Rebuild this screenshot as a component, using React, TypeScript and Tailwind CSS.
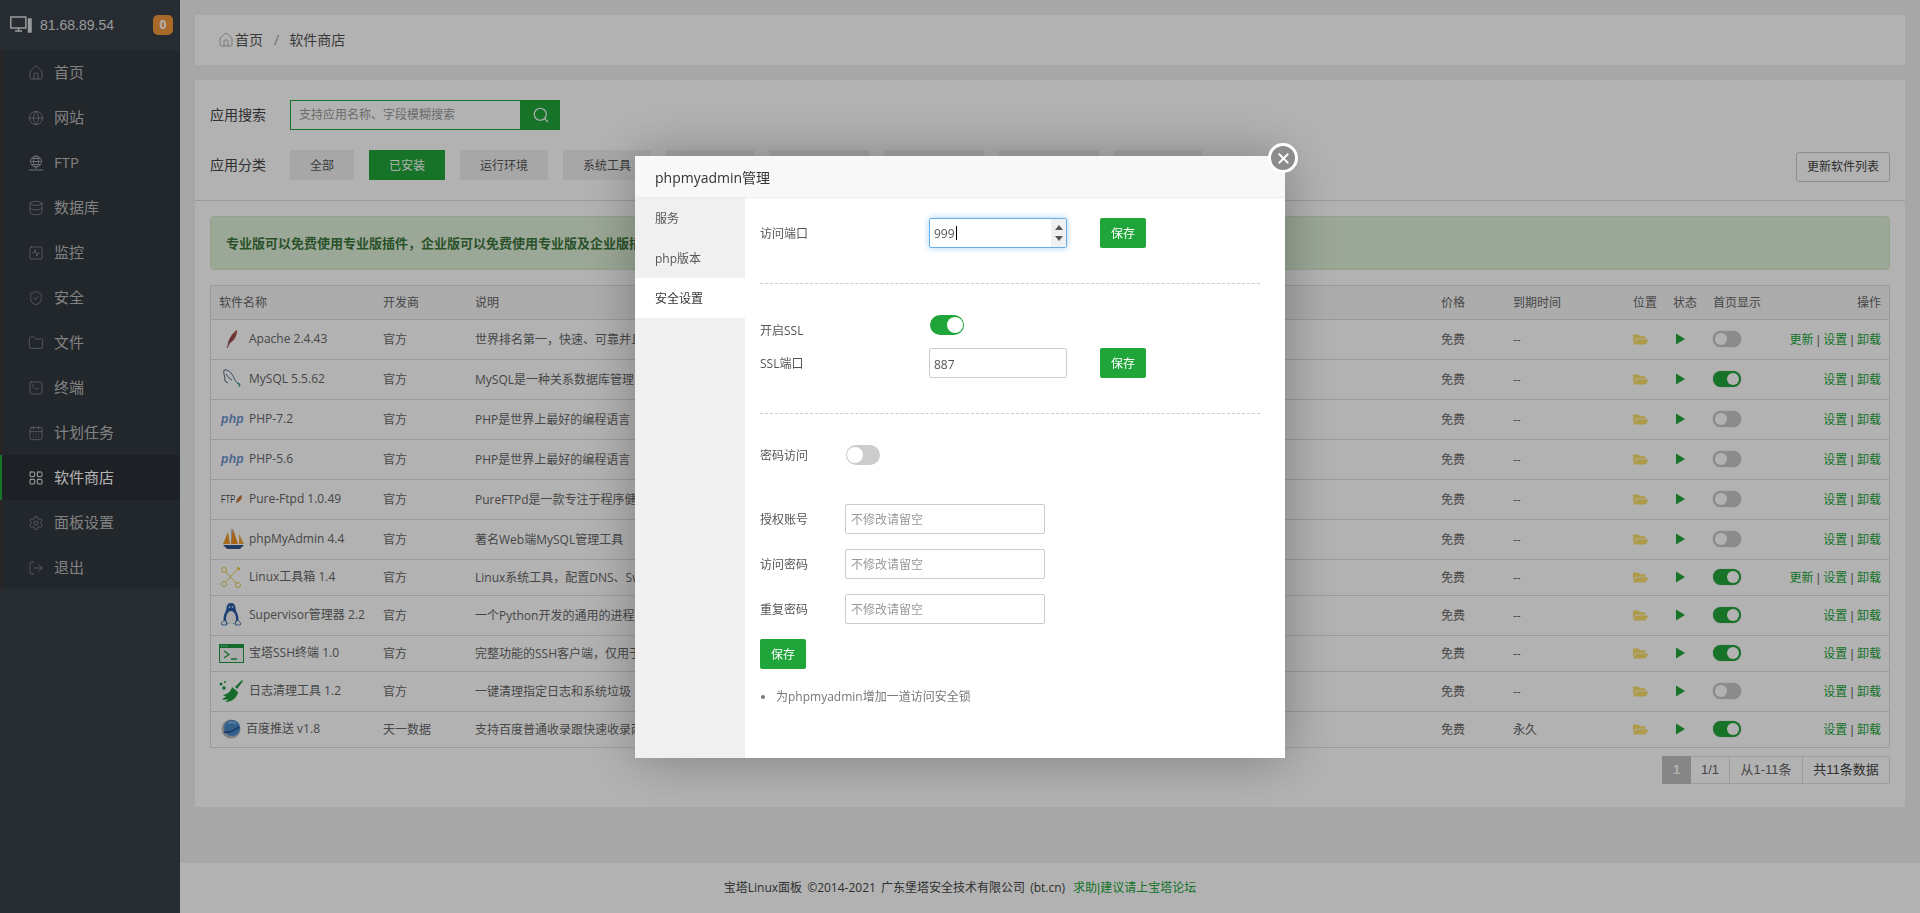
import { useState } from 'react';
import {
  House, Globe, Database, SquareActivity, ShieldCheck, Folder, SquareTerminal,
  CalendarDays, LayoutGrid, Settings, LogOut, Search, X,
} from 'lucide-react';
import { FaFolderOpen } from 'react-icons/fa';

const FONT = '"Open Sans", "Noto Sans CJK SC", sans-serif';

function FtpGlobe() {
  return (
    <svg width="16" height="16" viewBox="0 0 16 16" fill="none" stroke="currentColor" strokeWidth="1">
      <circle cx="8" cy="6.5" r="5.5" />
      <ellipse cx="8" cy="6.5" rx="2.5" ry="5.5" />
      <path d="M2.5 6.5h11M3.5 3.5h9M3.5 9.5h9M8 12v2M1 15h14" />
    </svg>
  );
}

const menu = [
  { label: '首页', icon: <House size={16} strokeWidth={1} /> },
  { label: '网站', icon: <Globe size={16} strokeWidth={1} /> },
  { label: 'FTP', icon: <FtpGlobe /> },
  { label: '数据库', icon: <Database size={16} strokeWidth={1} /> },
  { label: '监控', icon: <SquareActivity size={16} strokeWidth={1} /> },
  { label: '安全', icon: <ShieldCheck size={16} strokeWidth={1} /> },
  { label: '文件', icon: <Folder size={16} strokeWidth={1} /> },
  { label: '终端', icon: <SquareTerminal size={16} strokeWidth={1} /> },
  { label: '计划任务', icon: <CalendarDays size={16} strokeWidth={1} /> },
  { label: '软件商店', icon: <LayoutGrid size={16} strokeWidth={1.4} />, active: true },
  { label: '面板设置', icon: <Settings size={16} strokeWidth={1} /> },
  { label: '退出', icon: <LogOut size={16} strokeWidth={1} /> },
];

function Feather() {
  return (
    <svg width="24" height="24" viewBox="0 0 24 24">
      <path d="M8 20C9 13 13 6 18 3c.5 6-3.500 12-9 14z" fill="#a34f4a" />
      <path d="M8 21 14 9" stroke="#7a4a50" strokeWidth="1" />
    </svg>
  );
}

function Dolphin() {
  return (
    <svg width="24" height="24" viewBox="0 0 24 24" fill="none" strokeWidth="1">
      <path d="M5 3c4-1 8 3 10 8 1 3 4 5 6 8" stroke="#44709a" />
      <path d="M5 3c-1 3 1 6 1 11M6 14l3 2M7 7c2 3 4 5 6 6" stroke="#44607a" />
      <path d="M18 16l3 1-1 3" stroke="#2f9a90" />
    </svg>
  );
}

function PhpMark() {
  return <span className="w-[24px] pl-[2px] text-[12px] font-bold italic leading-none tracking-[0.3px] text-[#6a92d0] [font-family:'Liberation_Sans',sans-serif]">php</span>;
}

function FtpMark() {
  return (
    <span className="flex w-[24px] items-center pl-[2px] leading-none text-[#444] [font-family:'Liberation_Sans',sans-serif]">
      <span className="inline-block w-[14px] origin-left scale-x-[0.68] text-[11px]">FTP</span>
      <svg width="8" height="10" viewBox="0 0 8 10" className="shrink-0">
        <path d="M1 9c0-4 3-7 6-8 0 4-2 7-6 8z" fill="#c9793a" />
      </svg>
    </span>
  );
}

function Ship() {
  return (
    <svg width="25" height="24" viewBox="0 0 25 24">
      <path d="M13 2v15" stroke="#555" strokeWidth="0.8" />
      <polygon points="4,17 9,5 11,17" fill="#f09a2a" />
      <polygon points="12,17 14,2 19,17" fill="#ee8e1c" />
      <polygon points="20,17 20,7 25,17" fill="#f0a63c" />
      <path d="M4 18h21l-4 4H8z" fill="#34558c" />
    </svg>
  );
}

function Tools() {
  return (
    <svg width="24" height="24" viewBox="0 0 24 24" fill="none" stroke="#e8cc58" strokeWidth="1">
      <path d="M6 6 18 19M20 3 6 17" />
      <circle cx="5" cy="5" r="2.500" />
      <circle cx="19" cy="20" r="2.500" />
      <circle cx="5" cy="19" r="2.500" />
      <path d="M19 2l2 2-1.500 1.500L18 4z" fill="#e8cc58" />
    </svg>
  );
}

function Penguin() {
  return (
    <svg width="24" height="24" viewBox="0 0 24 24">
      <path d="M12 0c3 0 4.500 2 4.500 5 0 3 3 6 3 11 0 3-3 5-7.500 5S4.500 19 4.500 16c0-5 3-8 3-11 0-3 1.500-5 4.500-5z" fill="#2a5ea8" />
      <path d="M12 8c3 0 5 4 5 8s-2 5-5 5-5-1-5-5 2-8 5-8z" fill="#f4f4f4" />
      <circle cx="10.500" cy="4" r="0.800" fill="#fff" />
      <circle cx="13.500" cy="4" r="0.800" fill="#fff" />
      <path d="M2 21c1-3 3-4 5-3l1 4H3zM22 21c-1-3-3-4-5-3l-1 4h5z" fill="#f4f4f4" stroke="#2a5ea8" strokeWidth="0.8" />
    </svg>
  );
}

function TerminalMark() {
  return (
    <svg width="25" height="19" viewBox="0 0 25 19" fill="none">
      <rect x="0.500" y="0.500" width="24" height="18" stroke="#1f9a40" fill="#f6f6f6" />
      <rect x="0" y="0" width="25" height="4" fill="#1f9a40" />
      <path d="M2 2h1M4.500 2h1M7 2h1" stroke="#fff" />
      <path d="M5 7l5 3.500L5 14M12 15h6" stroke="#1f9a40" strokeWidth="1.300" />
    </svg>
  );
}

function Broom() {
  return (
    <svg width="24" height="24" viewBox="0 0 24 24" fill="#1f9a40">
      <path d="M23 1l1 1-6 8-2-2z" />
      <path d="M13 8l6 5c-1 6-6 10-13 10 2-1 3-3 3-3-2 1-5 1-6 0 3-1 4-3 4-3-1 0-2 0-3-1 5-1 8-4 9-8z" />
      <circle cx="2" cy="5" r="1.500" />
      <circle cx="6" cy="3" r="1" />
      <circle cx="5" cy="9" r="1.800" />
    </svg>
  );
}

function BaiduGlobe() {
  return (
    <svg width="20" height="20" viewBox="0 0 20 20">
      <circle cx="10" cy="10" r="9.500" fill="#b4b8c0" />
      <circle cx="11" cy="9" r="8" fill="#4a88c8" />
      <path d="M3 13c5 1 10-1 15-5" stroke="#2a5a98" strokeWidth="2" fill="none" />
      <path d="M7 4c3-1 6-1 8 1" stroke="#8ac0ee" strokeWidth="1.500" fill="none" />
    </svg>
  );
}

const rows = [
  { icon: <Feather />, name: 'Apache 2.4.43', dev: '官方', desc: '世界排名第一，快速、可靠并且可通过简单的API扩充', home: false, update: true, h: 'h-[40px]' },
  { icon: <Dolphin />, name: 'MySQL 5.5.62', dev: '官方', desc: 'MySQL是一种关系数据库管理系统！', home: true, h: 'h-[40px]' },
  { icon: <PhpMark />, name: 'PHP-7.2', dev: '官方', desc: 'PHP是世界上最好的编程语言', home: false, h: 'h-[40px]' },
  { icon: <PhpMark />, name: 'PHP-5.6', dev: '官方', desc: 'PHP是世界上最好的编程语言', home: false, h: 'h-[40px]' },
  { icon: <FtpMark />, name: 'Pure-Ftpd 1.0.49', dev: '官方', desc: 'PureFTPd是一款专注于程序健壮和软件安全的免费FTP服务器软件', home: false, h: 'h-[40px]' },
  { icon: <Ship />, name: 'phpMyAdmin 4.4', dev: '官方', desc: '著名Web端MySQL管理工具', home: false, h: 'h-[40px]' },
  { icon: <Tools />, name: 'Linux工具箱 1.4', dev: '官方', desc: 'Linux系统工具，配置DNS、Swap、IO调度、SSH', home: true, update: true, h: 'h-[36px]' },
  { icon: <Penguin />, name: 'Supervisor管理器 2.2', dev: '官方', desc: '一个Python开发的通用的进程管理程序', home: true, h: 'h-[40px]' },
  { icon: <TerminalMark />, name: '宝塔SSH终端 1.0', dev: '官方', desc: '完整功能的SSH客户端，仅用于连接本服务器', home: true, h: 'h-[36px]' },
  { icon: <Broom />, name: '日志清理工具 1.2', dev: '官方', desc: '一键清理指定日志和系统垃圾', home: false, h: 'h-[40px]' },
  { icon: <BaiduGlobe />, name: '百度推送 v1.8', dev: '天一数据', desc: '支持百度普通收录跟快速收录两种推送方式', home: true, expiry: '永久', narrow: true, h: 'h-[36px]' },
];

const categories = [
  { label: '全部', w: 'w-[64px]' },
  { label: '已安装', w: 'w-[76px]', active: true },
  { label: '运行环境', w: 'w-[88px]' },
  { label: '系统工具', w: 'w-[88px]' },
  { label: '宝塔插件', w: 'w-[88px]' },
  { label: '专业版插件', w: 'w-[100px]' },
  { label: '企业版插件', w: 'w-[100px]' },
  { label: '第三方应用', w: 'w-[100px]' },
  { label: '一键部署', w: 'w-[88px]' },
];

function MiniSwitch({ on }: { on: boolean }) {
  return (
    <span className={`flex h-[16px] w-[28px] items-center rounded-full px-[2px] shadow-[0_0_1px_rgba(0,0,0,0.4)] ${on ? 'justify-end bg-[#20a53a]' : 'justify-start bg-[#c8c8c8]'}`}>
      <span className="h-[12px] w-[12px] rounded-full bg-white" />
    </span>
  );
}

function Switch({ on }: { on: boolean }) {
  return (
    <span className={`flex h-[20px] w-[34px] items-center rounded-full px-[1px] ${on ? 'justify-end bg-[#20a53a]' : 'justify-start bg-[#ccc]'}`}>
      <span className="h-[16px] w-[16px] rounded-full bg-white" />
    </span>
  );
}

function SaveButton() {
  return (
    <button className="h-[30px] w-[46px] rounded-[2px] bg-[#20a53a] pt-[2px] text-[12px] text-white">保存</button>
  );
}

function Modal() {
  const [tab, setTab] = useState(2);
  return (
    <div className="fixed left-[635px] top-[156px] flex h-[602px] w-[650px] flex-col bg-white shadow-[1px_1px_50px_rgba(0,0,0,0.3)]">
      <div className="h-[42px] border-b border-[#eee] bg-[#f8f8f8] pl-[20px] text-[14px] leading-[43px] text-[#333]">phpmyadmin管理</div>
      <button className="absolute right-[-13px] top-[-13px] flex h-[30px] w-[30px] items-center justify-center rounded-full border-[3px] border-white bg-[#8c8c8c] text-white">
        <X size={17} strokeWidth={2.5} />
      </button>
      <div className="flex flex-1">
        <div className="w-[110px] bg-[#f0f0f0] text-[12px] text-[#555]">
          {['服务', 'php版本', '安全设置'].map((t, i) => (
            <div key={t} onClick={() => setTab(i)} className={`h-[40px] pl-[20px] leading-[42px] ${tab === i ? 'bg-white text-[#333]' : ''}`}>{t}</div>
          ))}
        </div>
        <div className="flex-1 pl-[15px] pt-[20px] text-[12px] text-[#555]">
          <div className="flex items-center">
            <span className="w-[169px] pt-[2px]">访问端口</span>
            <div className="flex h-[30px] w-[138px] items-center rounded-[2px] border border-[#66afe9] pl-[4px] text-[#555] shadow-[0_0_6px_rgba(102,175,233,0.6)]">
              <span className="pt-[2px]">999</span>
              <span className="ml-[1px] h-[14px] w-px bg-black" />
              <span className="ml-auto flex h-full w-[15px] flex-col items-center justify-center gap-[6px] bg-[#f0f0f0]">
                <span className="h-0 w-0 border-x-[4px] border-b-[5px] border-x-transparent border-b-[#555]" />
                <span className="h-0 w-0 border-x-[4px] border-t-[5px] border-x-transparent border-t-[#555]" />
              </span>
            </div>
            <span className="ml-[33px]"><SaveButton /></span>
          </div>
          <div className="mt-[35px] w-[500px] border-t border-dashed border-[#ccc]" />
          <div className="mt-[31px] flex h-[33px] items-start">
            <span className="mt-[6px] w-[170px] leading-[20px]">开启SSL</span>
            <Switch on />
          </div>
          <div className="flex items-center">
            <span className="w-[169px] pt-[2px]">SSL端口</span>
            <input defaultValue="887" className="h-[30px] w-[138px] rounded-[2px] border border-[#ccc] pl-[4px] pt-[2px] outline-none" />
            <span className="ml-[33px]"><SaveButton /></span>
          </div>
          <div className="mt-[35px] w-[500px] border-t border-dashed border-[#ccc]" />
          <div className="mt-[31px] flex h-[20px] items-center">
            <span className="w-[86px] pt-[2px]">密码访问</span>
            <Switch on={false} />
          </div>
          <div className="mt-[39px] flex flex-col gap-[15px]">
            {['授权账号', '访问密码', '重复密码'].map(l => (
              <div key={l} className="flex items-center">
                <span className="w-[85px] pt-[2px]">{l}</span>
                <input placeholder="不修改请留空" className="h-[30px] w-[200px] rounded-[2px] border border-[#ccc] pl-[5px] outline-none placeholder:text-[#999]" />
              </div>
            ))}
          </div>
          <div className="mt-[15px]"><SaveButton /></div>
          <ul className="mt-[18px] list-disc pl-[16px] leading-[20px] text-[#777]">
            <li>为phpmyadmin增加一道访问安全锁</li>
          </ul>
        </div>
      </div>
    </div>
  );
}

export default function App() {
  return (
    <div className="flex h-[913px] overflow-hidden bg-[#f0f0f0]" style={{ fontFamily: FONT }}>
      {/* Sidebar */}
      <aside className="flex w-[180px] shrink-0 flex-col bg-[#39404a]">
        <div className="flex h-[50px] items-center pl-[10px] pr-[7px] text-[14px] text-[#ddd]">
          <svg width="22" height="18" viewBox="0 0 22 18" fill="none" stroke="currentColor" strokeWidth="1.5">
            <rect x="0.800" y="1" width="15" height="11" />
            <path d="M5 15h7M8.500 12v3" />
            <rect x="18.500" y="3" width="2.500" height="13" fill="currentColor" />
          </svg>
          <span className="ml-[8px] [font-family:'Liberation_Sans',sans-serif]">81.68.89.54</span>
          <span className="ml-auto flex h-[20px] w-[20px] items-center justify-center rounded-[5px] bg-[#f0983c] text-[12px] font-bold text-white">0</span>
        </div>
        <nav className="h-[538px] bg-[#31383f] text-[15px] text-[#bbb]">
          {menu.map(m => (
            <div key={m.label} className={`flex h-[45px] items-center border-l-2 pl-[26px] ${m.active ? 'border-[#20a53a] bg-[#2a2f36] text-white' : 'border-[#3a3634]'}`}>
              <span className={`flex w-[26px] ${m.active ? 'text-white' : 'text-[#9aa0a6]'}`}>{m.icon}</span>
              {m.label}
            </div>
          ))}
        </nav>
      </aside>

      {/* Main */}
      <main className="flex min-w-0 flex-1 flex-col">
        <div className="mx-[15px] mt-[15px] flex h-[50px] items-center bg-white pl-[23px] text-[14px] text-[#555]">
          <House size={16} strokeWidth={1} className="text-[#888]" />
          <span className="ml-[1px] pb-[2px]">首页</span>
          <span className="mx-[11px] pb-[2px] text-[#999]">/</span>
          <span className="-ml-[1px] pb-[2px]">软件商店</span>
        </div>

        <div className="relative mx-[15px] mt-[15px] h-[727px] bg-white px-[15px] pt-[20px] text-[12px] text-[#666]">
          <div className="flex items-center">
            <span className="w-[80px] pb-[2px] text-[14px] text-[#444]">应用搜索</span>
            <div className="flex h-[30px] w-[270px]">
              <input placeholder="支持应用名称、字段模糊搜索" className="w-[231px] border border-[#20a53a] pl-[8px] outline-none placeholder:text-[#999]" />
              <button className="flex flex-1 items-center justify-center bg-[#20a53a] text-white"><Search size={18} strokeWidth={1.5} /></button>
            </div>
          </div>

          <div className="mt-[20px] flex">
            <span className="w-[80px] text-[14px] leading-[30px] text-[#444]">应用分类</span>
            <div className="flex gap-[15px]">
              {categories.map(c => (
                <span key={c.label} className={`h-[30px] text-center leading-[32px] ${c.w} ${c.active ? 'bg-[#20a53a] text-white' : 'bg-[#f0f0f0] text-[#555]'}`}>{c.label}</span>
              ))}
            </div>
            <button className="ml-auto mt-[2px] h-[30px] w-[94px] rounded-[3px] border border-[#ccc] text-[#444]">更新软件列表</button>
          </div>

          <div className="-mx-[15px] mt-[18px] border-t border-[#ddd]" />

          <div className="mt-[15px] h-[54px] rounded-[4px] border border-[#d6e9c6] bg-[#dff0d8] pl-[15px] text-[13px] font-bold leading-[52px] text-[#3c763d]">
            专业版可以免费使用专业版插件，企业版可以免费使用专业版及企业版插件。
          </div>

          <div className="mt-[15px] border border-[#ddd]">
            <table className="w-full table-fixed border-collapse">
              <colgroup>
                <col className="w-[164px]" />
                <col className="w-[92px]" />
                <col />
                <col className="w-[72px]" />
                <col className="w-[120px]" />
                <col className="w-[40px]" />
                <col className="w-[40px]" />
                <col className="w-[70px]" />
                <col className="w-[114px]" />
              </colgroup>
              <thead>
                <tr className="h-[33px] bg-[#f6f6f6] text-left font-normal text-[#666]">
                  {['软件名称', '开发商', '说明', '价格', '到期时间', '位置', '状态', '首页显示'].map(h => (
                    <th key={h} className="pl-[8px] pt-[2px] font-normal">{h}</th>
                  ))}
                  <th className="pr-[8px] pt-[2px] text-right font-normal">操作</th>
                </tr>
              </thead>
              <tbody>
                {rows.map(r => (
                  <tr key={r.name} className={`border-t border-[#ddd] ${r.h}`}>
                    <td className="pl-[8px]">
                      <div className="flex items-center">
                        <span className={`flex shrink-0 items-center ${r.narrow ? 'w-[27px] pl-[2px]' : 'w-[30px]'}`}>{r.icon}</span>
                        <span className="whitespace-nowrap">{r.name}</span>
                      </div>
                    </td>
                    <td className="pl-[8px] pt-[2px]">{r.dev}</td>
                    <td className="overflow-hidden whitespace-nowrap pl-[8px] pt-[2px]">{r.desc}</td>
                    <td className="pl-[8px] pt-[2px]">免费</td>
                    <td className="pl-[8px] pt-[2px]">{r.expiry ?? '--'}</td>
                    <td className="pl-[8px]"><FaFolderOpen size={15} className="text-[#fbdd6b]" /></td>
                    <td className="pl-[8px]">
                      <svg width="11" height="12" viewBox="0 0 11 12" className="ml-[2px]"><path d="M1 0.500v11L10 6z" fill="#20a53a" /></svg>
                    </td>
                    <td className="pl-[8px]"><MiniSwitch on={r.home} /></td>
                    <td className="whitespace-nowrap pr-[8px] pt-[2px] text-right text-[#20a53a] [font-family:'Liberation_Sans','Noto_Sans_CJK_SC',sans-serif]">
                      {r.update && <>更新 <span className="text-[#666]">|</span> </>}
                      设置 <span className="text-[#666]">|</span> 卸载
                    </td>
                  </tr>
                ))}
              </tbody>
            </table>
          </div>

          <div className="mt-[8px] flex justify-end">
            <div className="flex h-[28px] border border-[#e0e0e0] text-[13px] leading-[26px] [font-family:'Liberation_Sans','Noto_Sans_CJK_SC',sans-serif]">
              <span className="-my-px -ml-px w-[29px] bg-[#c0c0c0] text-center font-bold leading-[28px] text-white">1</span>
              <span className="w-[39px] border-r border-[#e0e0e0] text-center">1/1</span>
              <span className="w-[73px] border-r border-[#e0e0e0] text-center">从1-11条</span>
              <span className="w-[86px] text-center text-[#444]">共11条数据</span>
            </div>
          </div>
        </div>

        <div className="mt-auto h-[50px] bg-white pr-[180px] text-center text-[12px] leading-[50px] text-[#444] [word-spacing:2px]">
          宝塔Linux面板 ©2014-2021 广东堡塔安全技术有限公司 (bt.cn)
          <span className="ml-[8px] text-[#20a53a]">求助<span className="[font-family:'Liberation_Sans',sans-serif]">|</span>建议请上宝塔论坛</span>
        </div>
      </main>

      <div className="fixed inset-0 bg-black/30" />
      <Modal />
    </div>
  );
}
